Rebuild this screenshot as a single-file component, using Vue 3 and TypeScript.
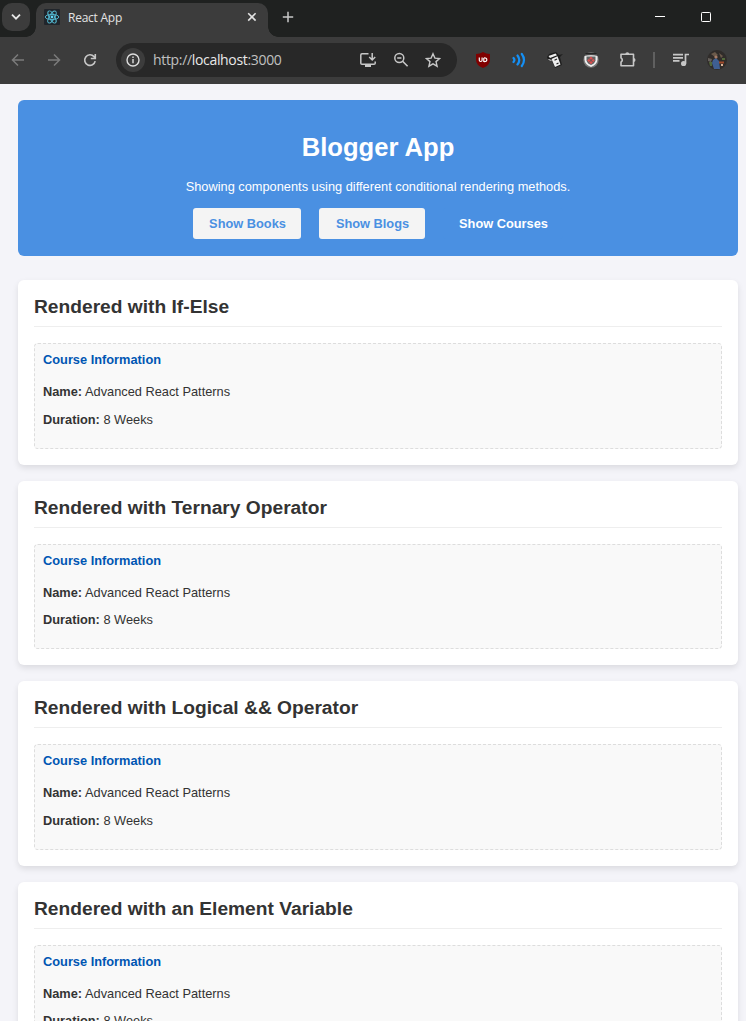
<script setup lang="ts">
interface Section { title: string }
const sections: Section[] = [
  { title: 'Rendered with If-Else' },
  { title: 'Rendered with Ternary Operator' },
  { title: 'Rendered with Logical && Operator' },
  { title: 'Rendered with an Element Variable' },
]
const course = { name: 'Advanced React Patterns', duration: '8 Weeks' }
</script>

<template>
  <div class="window">
    <div class="tabs">
      <button class="tab-search" aria-label="Search tabs">
        <svg width="28" height="28" viewBox="0 0 28 28"><path d="M10 11.700l4 4 4-4" fill="none" stroke="#e8e8e8" stroke-width="1.800" /></svg>
      </button>
      <div class="tab">
        <svg class="favicon" width="16" height="16" viewBox="0 0 16 16">
          <rect width="16" height="16" rx="1" fill="#20252b" />
          <g fill="none" stroke="#53b9d1" stroke-width=".95">
            <ellipse cx="8" cy="8" rx="6.800" ry="2.600" />
            <ellipse cx="8" cy="8" rx="6.800" ry="2.600" transform="rotate(60 8 8)" />
            <ellipse cx="8" cy="8" rx="6.800" ry="2.600" transform="rotate(120 8 8)" />
          </g>
          <circle cx="8" cy="8" r="1.400" fill="#61dafb" />
        </svg>
        <span class="tab-title">React App</span>
        <svg class="close" width="10" height="10" viewBox="0 0 10 10"><path d="M1.200 1.200l7.400 7.400M8.600 1.200L1.200 8.600" stroke="#e3e3e3" stroke-width="1.600" /></svg>
      </div>
      <svg class="new-tab" width="12" height="12" viewBox="0 0 12 12"><path d="M6 .8v10.400M.8 6h10.400" stroke="#c7c7c7" stroke-width="1.500" /></svg>
      <div class="controls">
        <svg width="10" height="10" viewBox="0 0 10 10"><path d="M0 4.500h10" stroke="#fff" /></svg>
        <svg width="10" height="10" viewBox="0 0 10 10"><rect x=".5" y=".5" width="9" height="9" rx=".8" fill="none" stroke="#fff" /></svg>
      </div>
    </div>

    <div class="toolbar">
      <div class="nav">
        <svg width="14" height="14" viewBox="0 0 14 14"><path d="M13 7H2M7 1.500L1.500 7 7 12.500" fill="none" stroke="#7b7b7b" stroke-width="1.500" /></svg>
        <svg width="14" height="14" viewBox="0 0 14 14"><path d="M1 7h11M7 1.500L12.500 7 7 12.500" fill="none" stroke="#7b7b7b" stroke-width="1.500" /></svg>
        <svg width="14" height="14" viewBox="0 0 14 14"><path d="M12.200 8.200A5.300 5.300 0 1 1 11 3.600l1.200 1.200M12.300 1v4.500H7.800" fill="none" stroke="#c7c7c7" stroke-width="1.600" /></svg>
      </div>
      <div class="address">
        <span class="info">
          <svg width="14" height="14" viewBox="0 0 14 14"><circle cx="7" cy="7" r="6" fill="none" stroke="#dedede" stroke-width="1.400" /><path d="M7 6v4.200M7 3.600v1.500" stroke="#dedede" stroke-width="1.400" /></svg>
        </span>
        <span class="url"><i>http://</i>localhost<i>:3000</i></span>
        <div class="actions">
          <svg width="18" height="16" viewBox="0 0 18 16"><path d="M9.500 1.800H3Q1.800 1.800 1.800 3v8.200q0 1 1.200 1h12q1.200 0 1.200-1V9.500M13.200 1v6.200M10.200 5l3 3 3-3" fill="none" stroke="#c7c7c7" stroke-width="1.500" /><path d="M6 12h6v3H6z" fill="#c7c7c7" /></svg>
          <svg width="16" height="16" viewBox="0 0 16 16"><circle cx="6.300" cy="6" r="4.500" fill="none" stroke="#c7c7c7" stroke-width="1.500" /><path d="M9.600 9.300l5 5M4.200 6h4.200" stroke="#c7c7c7" stroke-width="1.600" /></svg>
          <svg width="16" height="16" viewBox="0 0 16 16"><path d="M8 1.800l1.900 4.300 4.700.4-3.600 3.100 1.100 4.600L8 11.800l-4.100 2.400L5 9.600 1.400 6.500l4.700-.4z" fill="none" stroke="#c7c7c7" stroke-width="1.400" /></svg>
        </div>
      </div>
      <div class="extensions">
        <svg width="16" height="16" viewBox="0 0 16 16"><path d="M8 0q3 2 7 2v6q0 5-7 8Q1 13 1 8V2q4 0 7-2z" fill="#800000" /><path d="M4.300 5.500v2.800q0 1.200 1.400 1.200t1.400-1.200V5.500M8.800 6v3.500q3 .3 3-1.800t-3-1.700" fill="none" stroke="#fff" stroke-width="1.200" /></svg>
        <svg width="16" height="16" viewBox="0 0 16 16"><path d="M2.500 6q1.800 2 0 4M6.500 3.500q3.500 4.500 0 9M10.800 2q4.400 6 0 12" fill="none" stroke="#1590f5" stroke-width="2.200" stroke-linecap="round" /></svg>
        <svg width="16" height="16" viewBox="0 0 16 16"><path d="M0 5l2-3 7-2 3 3 4-1-3 3 2 8-7 3-3-7-4-1z" fill="#1e1e1e" /><path d="M1.500 4l7-2.500 1.500 1.800-7 2.700zM4.500 7l6-2.800 3 8.300L8 15z" fill="#eee" /><path d="M7.500 8.200l2.500-1.200M9.500 12l2-1" stroke="#222" stroke-width="1.200" /><path d="M1.500 7.500l3 1" stroke="#ddd" /></svg>
        <svg width="16" height="16" viewBox="0 0 16 16"><circle cx="8" cy="8" r="7.700" fill="#777" /><path d="M2.500 1.800h11" stroke="#222" stroke-width="1.500" /><path d="M1.500 4.300q6.500-2 13 0v3q0 5-6.500 7.700Q1.500 12.300 1.500 7.300z" fill="#eee" /><path d="M3.500 4.500h9v4q-1 3.500-4.500 4.500-3.500-1-4.500-4.500z" fill="#606565" /><path d="M8 4.600L11.800 8.400 8 12.200 4.200 8.400z" fill="#d95050" /><path d="M6 6.400l4 4m0-4l-4 4" stroke="#555" stroke-width=".9" /></svg>
        <svg width="18" height="18" viewBox="0 0 18 18"><path d="M2 3.200h12.500v11.600H2v-3.600Q4.600 9 2 6.800z" fill="none" stroke="#c7c7c7" stroke-width="1.600" stroke-linejoin="round" /><path d="M6.300 3.200a2 2 0 0 1 4 0zM14.500 7a2 2 0 0 1 0 4z" fill="#c7c7c7" /></svg>
        <span class="divider"></span>
        <svg class="media" width="16" height="14" viewBox="0 0 16 14"><path d="M0 1.700h10M0 4.800h10M0 7.900h6.500M12.500 10.500V1.500H16" fill="none" stroke="#c7c7c7" stroke-width="1.700" /><circle cx="10.600" cy="10.500" r="2.600" fill="#c7c7c7" /></svg>
        <svg class="profile" width="20" height="20" viewBox="0 0 20 20"><circle cx="10" cy="10" r="10" fill="#302c2a" /><path d="M4 4l4-2 3 3-3 2zM12 3l4 3-2 2z" fill="#6b5a4b" /><path d="M1 8l4 1-1 3-3-1z" fill="#66605b" /><path d="M6 10l3-2 3 3 1 8-6 0-2-6z" fill="#3f5f92" /><circle cx="9" cy="7" r="1.600" fill="#a87d68" /><path d="M12 11.500h5v2h-5z" fill="#a04a2b" /><path d="M14 14h2v2h-2z" fill="#d8b49a" /><path d="M2 12h3v4H3zM15 8h3v2h-3z" fill="#52693b" /></svg>
      </div>
    </div>

    <main class="page">
      <header class="hero">
        <h1>Blogger App</h1>
        <p>Showing components using different conditional rendering methods.</p>
        <div class="buttons">
          <button class="books">Show Books</button>
          <button class="blogs">Show Blogs</button>
          <button class="courses">Show Courses</button>
        </div>
      </header>
      <section v-for="section in sections" :key="section.title" class="card">
        <h2>{{ section.title }}</h2>
        <div class="course">
          <h3>Course Information</h3>
          <p><strong>Name:</strong> {{ course.name }}</p>
          <p><strong>Duration:</strong> {{ course.duration }}</p>
        </div>
      </section>
    </main>
  </div>
</template>

<style>
body { margin: 0; background: #f4f4f9; }
</style>

<style scoped>
* { box-sizing: border-box; }
svg { display: block; flex: none; }
button { border: 0; padding: 0; font: inherit; }
.window { height: 1021px; overflow: hidden; background: #f4f4f9; font: 12.8px/15px "Liberation Sans", Arial, sans-serif; color: #333; }
.tabs { display: flex; height: 37px; background: #1f2120; padding: 3px 35px 0 2px; }
.tab-search { width: 28px; height: 28px; border-radius: 10px; background: #3c3c3c; }
.tab { position: relative; display: flex; align-items: center; width: 232px; height: 34px; margin-left: 6px; padding: 0 11px 6px 8px; border-radius: 10px 10px 0 0; background: #3c3c3c; }
.tab::before, .tab::after { content: ""; position: absolute; bottom: 0; width: 10px; height: 10px; }
.tab::before { left: -10px; background: radial-gradient(circle at 0 0, transparent 9.5px, #3c3c3c 10px); }
.tab::after { right: -10px; background: radial-gradient(circle at 100% 0, transparent 9.5px, #3c3c3c 10px); }
.tab-title { margin-left: 8px; padding-top: 2px; font: 12px/16px "Open Sans", sans-serif; letter-spacing: -.25px; color: #e3e3e3; }
.close { margin-left: auto; }
.new-tab { margin: 8px 0 0 14px; }
.controls { display: flex; gap: 36px; margin: 9px 0 0 auto; }
.toolbar { display: flex; align-items: center; height: 47px; padding: 0 19px 1px 11px; background: #3c3c3c; }
.nav { display: flex; gap: 22px; }
.address { display: flex; align-items: center; width: 341px; height: 34px; margin-left: 19px; padding: 0 16px 0 5px; border-radius: 17px; background: #282828; }
.info { display: grid; place-items: center; width: 24px; height: 24px; border-radius: 50%; background: #3c3c3c; }
.url { margin-left: 8px; font: 14px/20px "Open Sans", sans-serif; letter-spacing: -.33px; color: #e8e8e8; }
.url i { font-style: normal; color: #c0c0c0; }
.actions { display: flex; align-items: center; gap: 16px; margin-left: auto; }
.extensions { display: flex; align-items: center; gap: 20px; margin-left: auto; }
.divider { width: 2px; height: 16px; background: #606060; margin: 0 -2px 0 -4px; }
.profile { margin-left: -2px; }
.page { padding: 16px 8px 0 18px; }
.hero { height: 156px; padding-top: 33px; border-radius: 6px; background: #4a90e2; color: #fff; text-align: center; }
h1, h2, h3, p { margin: 0; }
h1 { font-size: 25.6px; line-height: 29px; }
.hero p { margin-top: 17px; line-height: 15px; }
.buttons { display: flex; justify-content: center; gap: 18px; margin-top: 14px; }
.buttons button { height: 31px; padding: 0 0 1px 1px; border-radius: 3px; font-weight: 700; background: #f4f4f4; color: #4a90e2; }
.buttons .books { width: 108px; }
.buttons .blogs { width: 106px; }
.buttons .courses { width: 120px; background: #4a90e2; color: #fff; }
.card { margin-top: 16px; padding: 16px; border-radius: 6px; background: #fff; box-shadow: 0 3px 6px rgba(0, 0, 0, .1); }
.hero + .card { margin-top: 24px; }
h2 { padding-bottom: 8px; border-bottom: 1px solid #eee; font-size: 19.2px; line-height: 22px; }
.course { margin-top: 16px; height: 105.6px; padding: 8px; border: 1px dashed #ddd; border-radius: 4px; background: #f9f9f9; }
h3 { margin-bottom: 17px; font-size: 12.8px; line-height: 15px; color: #0056b3; }
.course p + p { margin-top: 12.6px; }
</style>
